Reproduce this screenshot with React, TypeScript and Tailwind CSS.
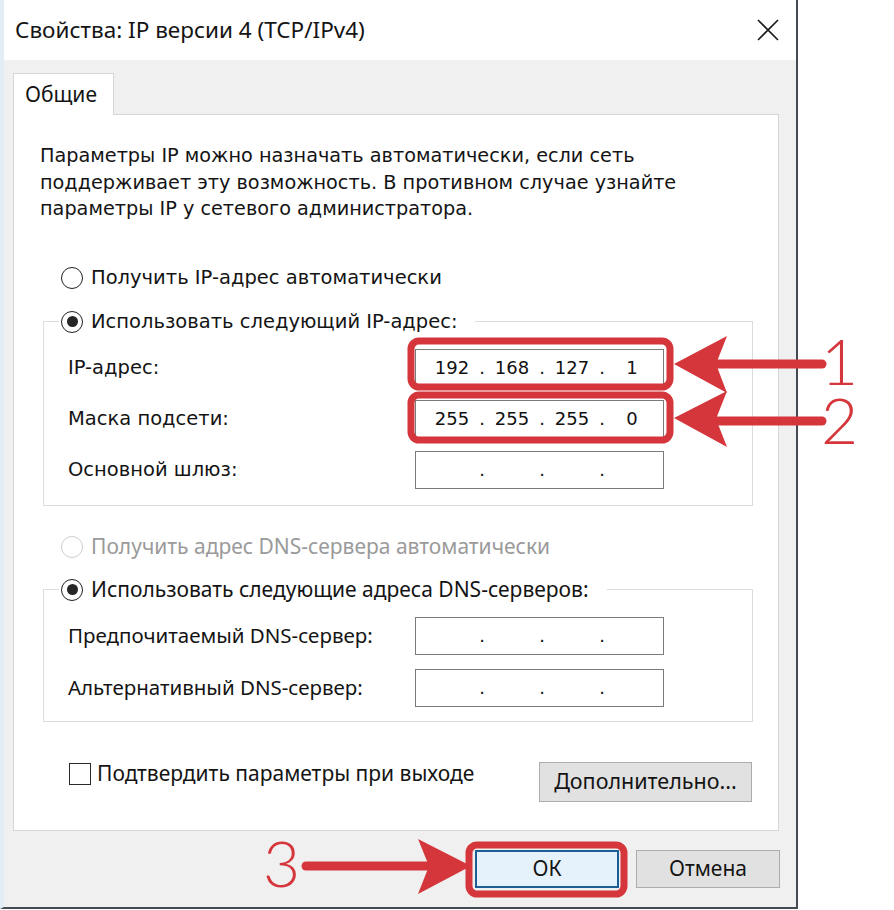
import React from 'react';

const tahoma = { fontFamily: '"DejaVu Sans", "Noto Sans", sans-serif' };
const segoe = { fontFamily: '"Noto Sans", "Open Sans", sans-serif' };

function Radio({ checked, disabled }: { checked?: boolean; disabled?: boolean }) {
  return (
    <span
      className={
        'w-[22px] h-[22px] rounded-full border-[1.5px] flex items-center justify-center bg-white shrink-0 ' +
        (disabled ? 'border-[#cfcfcf]' : 'border-[#1f1f1f]')
      }
    >
      {checked && <span className="w-[11px] h-[11px] rounded-full bg-[#262626]" />}
    </span>
  );
}

// поле ввода IP: 4 ячейки по 60px, точки на границах
function IpField({ parts }: { parts?: string[] }) {
  const p = parts ?? ['', '', '', ''];
  return (
    <div className="w-[249px] h-[38px] border border-[#7a7a7a] bg-white flex items-center pl-[6px] text-[18px] text-[#111]" style={tahoma}>
      {p.map((v, i) => (
        <React.Fragment key={i}>
          {i > 0 && <span className="w-0 flex justify-center">.</span>}
          <span className="w-[60px] text-center">{v}</span>
        </React.Fragment>
      ))}
    </div>
  );
}

function Row({ label, parts, font }: { label: string; parts?: string[]; font: React.CSSProperties }) {
  return (
    <div className="flex items-center justify-between h-[38px] pl-[24px] pr-[88px]">
      <span style={font}>{label}</span>
      <IpField parts={parts} />
    </div>
  );
}

function Annotations() {
  const red = '#d5363b';
  return (
    <svg className="absolute inset-0 pointer-events-none" width="894" height="910" viewBox="0 0 894 910">
      <rect x="411" y="341" width="259" height="46" rx="8" fill="none" stroke={red} strokeWidth="7" />
      <rect x="411" y="395" width="259" height="45" rx="8" fill="none" stroke={red} strokeWidth="7" />
      <rect x="469" y="845" width="155" height="49" rx="8" fill="none" stroke={red} strokeWidth="7" />

      <line x1="712" y1="364" x2="822" y2="364" stroke={red} strokeWidth="9" strokeLinecap="round" />
      <polygon points="674,364 727,336 716,364 727,393" fill={red} />
      <line x1="712" y1="421" x2="822" y2="421" stroke={red} strokeWidth="9" strokeLinecap="round" />
      <polygon points="674,418 727,391 716,419 727,447" fill={red} />
      <line x1="306" y1="866" x2="428" y2="866" stroke={red} strokeWidth="9" strokeLinecap="round" />
      <polygon points="471,866 418,839 429,866 418,894" fill={red} />

      <g fill={red} style={{ fontFamily: 'Lato, "Liberation Sans", sans-serif', fontWeight: 300 }} fontSize="64">
        <text x="821" y="385">1</text>
        <text x="821" y="444">2</text>
        <text x="263" y="887">3</text>
      </g>
    </svg>
  );
}

export default function App() {
  return (
    <div className="relative w-[894px] h-[910px] bg-white overflow-hidden text-[#141414]">
      <div className="w-[798px] h-[909px] flex flex-col border-l-[4px] border-l-[#e2edf5] border-r-2 border-r-[#454b52] border-b-2 border-b-[#454b52]">
        {/* заголовок окна */}
        <div className="h-[60px] bg-white flex items-center justify-between pl-[11px] pr-[17px]">
          <span className="text-[22.5px]" style={segoe}>Свойства: IP версии 4 (TCP/IPv4)</span>
          <svg width="22" height="22" viewBox="0 0 22 22">
            <path d="M1 1 L21 21 M21 1 L1 21" stroke="#1a1a1a" strokeWidth="1.6" />
          </svg>
        </div>

        <div className="flex-1 bg-[#f0f0f0] flex flex-col pl-[9px] pr-[16px] pt-[13px]">
          <div className="w-[101px] h-[42px] bg-white border border-[#d6d6d6] border-b-0 relative z-10 -mb-px flex items-center pl-[11px] text-[21px]" style={segoe}>
            Общие
          </div>
          <div className="w-[766px] h-[717px] bg-white border border-[#d6d6d6] pl-[26px] pr-[26px] pt-[28px] flex flex-col">
            <p className="text-[19.25px] leading-[26.5px]" style={tahoma}>
              Параметры IP можно назначать автоматически, если сеть
              <br />
              поддерживает эту возможность. В противном случае узнайте
              <br />
              параметры IP у сетевого администратора.
            </p>

            <div className="mt-[42px] ml-[21px] h-[26px] flex items-center gap-[8px] text-[19.5px]" style={tahoma}>
              <Radio />
              <span>Получить IP-адрес автоматически</span>
            </div>

            <fieldset className="mt-[18px] ml-[3px] w-[710px] border border-[#dcdcdc] pb-[16px] text-[19.5px]" style={tahoma}>
              <legend className="ml-[15px] pl-[2px] pr-[18px] h-[26px] flex items-center gap-[8px]">
                <Radio checked />
                <span>Использовать следующий IP-адрес:</span>
              </legend>
              <div className="pt-[14px] flex flex-col gap-[13px]">
                <Row label="IP-адрес:" parts={['192', '168', '127', '1']} font={tahoma} />
                <Row label="Маска подсети:" parts={['255', '255', '255', '0']} font={tahoma} />
                <Row label="Основной шлюз:" font={tahoma} />
              </div>
            </fieldset>

            <div className="mt-[28px] ml-[21px] h-[26px] flex items-center gap-[8px] text-[21px] text-[#9a9a9a]" style={segoe}>
              <Radio disabled />
              <span>Получить адрес DNS-сервера автоматически</span>
            </div>

            <fieldset className="mt-[17px] ml-[3px] w-[710px] border border-[#dcdcdc] pb-[14px] text-[21px]" style={segoe}>
              <legend className="ml-[15px] pl-[2px] pr-[18px] h-[26px] flex items-center gap-[8px]">
                <Radio checked />
                <span>Использовать следующие адреса DNS-серверов:</span>
              </legend>
              <div className="pt-[14px] flex flex-col gap-[14px] text-[20.5px]">
                <Row label="Предпочитаемый DNS-сервер:" font={segoe} />
                <Row label="Альтернативный DNS-сервер:" font={segoe} />
              </div>
            </fieldset>

            <div className="mt-[39px] flex items-start justify-between">
              <div className="ml-[29px] h-[26px] flex items-center gap-[6px] text-[21px]" style={segoe}>
                <span className="w-[22px] h-[22px] border-[1.5px] border-[#2a2a2a] bg-white" />
                <span>Подтвердить параметры при выходе</span>
              </div>
              <button className="mt-[1px] w-[213px] h-[40px] bg-[#e1e1e1] border border-[#adadad] text-[21.5px]" style={segoe}>
                <span className="underline underline-offset-2 decoration-1">Д</span>ополнительно...
              </button>
            </div>
          </div>

          <div className="mt-[19px] flex justify-end gap-[17px]">
            <button className="w-[144px] h-[38px] bg-[#e5f1fb] border-2 border-[#1d5f94] text-[21px]" style={segoe}>
              ОК
            </button>
            <button className="w-[144px] h-[38px] bg-[#e1e1e1] border border-[#adadad] text-[21px]" style={segoe}>
              Отмена
            </button>
          </div>
        </div>
      </div>
      <Annotations />
    </div>
  );
}
